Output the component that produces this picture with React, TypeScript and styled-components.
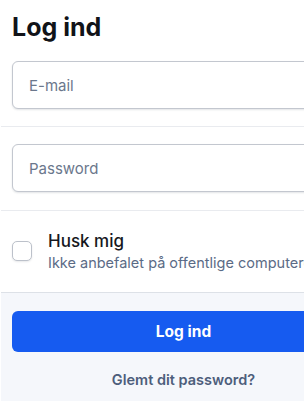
import React from "react";
import styled, { createGlobalStyle } from "styled-components";

const Global = createGlobalStyle`
  html, body { margin: 0; padding: 0; background: #ffffff; overflow: hidden; }
  body { font-family: Inter, "Noto Sans", sans-serif; }
  * { box-sizing: border-box; }
`;

const Card = styled.div`
  width: 366px;
  border-left: 1px solid #ffffff;
  display: flex;
  flex-direction: column;
  background: #ffffff;
`;

const Header = styled.div`
  padding: 10px 11px 0;
`;

const Title = styled.h1`
  margin: 0;
  font-size: 25px;
  line-height: 34px;
  font-weight: 700;
  color: #111318;
`;

const Section = styled.div<{ $extra?: number }>`
  padding: 17px 11px ${(p) => 17 + (p.$extra ?? 0)}px;
  border-bottom: 1px solid #e9ebef;
`;

const Input = styled.input`
  display: block;
  width: 100%;
  height: 48px;
  padding: 0 16px;
  border: 1px solid #c3c7cf;
  border-radius: 6px;
  box-shadow: 0 1px 2px rgba(20, 30, 50, 0.12);
  font-family: inherit;
  font-size: 15px;
  color: #1c2230;
  background: #ffffff;
  outline: none;
  &::placeholder { color: #6b778c; }
`;

const CheckRow = styled.label`
  display: flex;
  align-items: center;
  gap: 16px;
  padding: 18px 11px 19px;
  border-bottom: 1px solid #dde1e7;
`;

const Box = styled.span`
  width: 20px;
  height: 20px;
  flex: none;
  border: 1px solid #bcc1ca;
  border-radius: 5px;
  background: #ffffff;
  box-shadow: 0 1px 2px rgba(20, 30, 50, 0.1);
`;

const CheckText = styled.div`
  display: flex;
  flex-direction: column;
`;

const CheckTitle = styled.span`
  font-size: 17px;
  line-height: 24px;
  font-weight: 500;
  color: #16181d;
`;

const CheckSub = styled.span`
  font-size: 14.5px;
  line-height: 20px;
  color: #5b6b86;
  white-space: nowrap;
`;

const Footer = styled.div`
  background: #f5f7fb;
  padding: 18px 11px 30px;
  display: flex;
  flex-direction: column;
  align-items: center;
  gap: 18px;
`;

const Button = styled.button`
  width: 100%;
  height: 41px;
  border: none;
  border-radius: 6px;
  background: #165bf0;
  color: #ffffff;
  font-family: inherit;
  font-size: 15.5px;
  font-weight: 700;
`;

const Link = styled.a`
  font-size: 14.5px;
  line-height: 20px;
  font-weight: 600;
  color: #4d5e7b;
  text-decoration: none;
`;

export default function App() {
  return (
    <>
      <Global />
      <Card>
        <Header>
          <Title>Log ind</Title>
        </Header>
        <Section>
          <Input placeholder="E-mail" />
        </Section>
        <Section $extra={1}>
          <Input type="password" placeholder="Password" />
        </Section>
        <CheckRow>
          <Box />
          <CheckText>
            <CheckTitle>Husk mig</CheckTitle>
            <CheckSub>Ikke anbefalet på offentlige computere</CheckSub>
          </CheckText>
        </CheckRow>
        <Footer>
          <Button>Log ind</Button>
          <Link href="#">Glemt dit password?</Link>
        </Footer>
      </Card>
    </>
  );
}
